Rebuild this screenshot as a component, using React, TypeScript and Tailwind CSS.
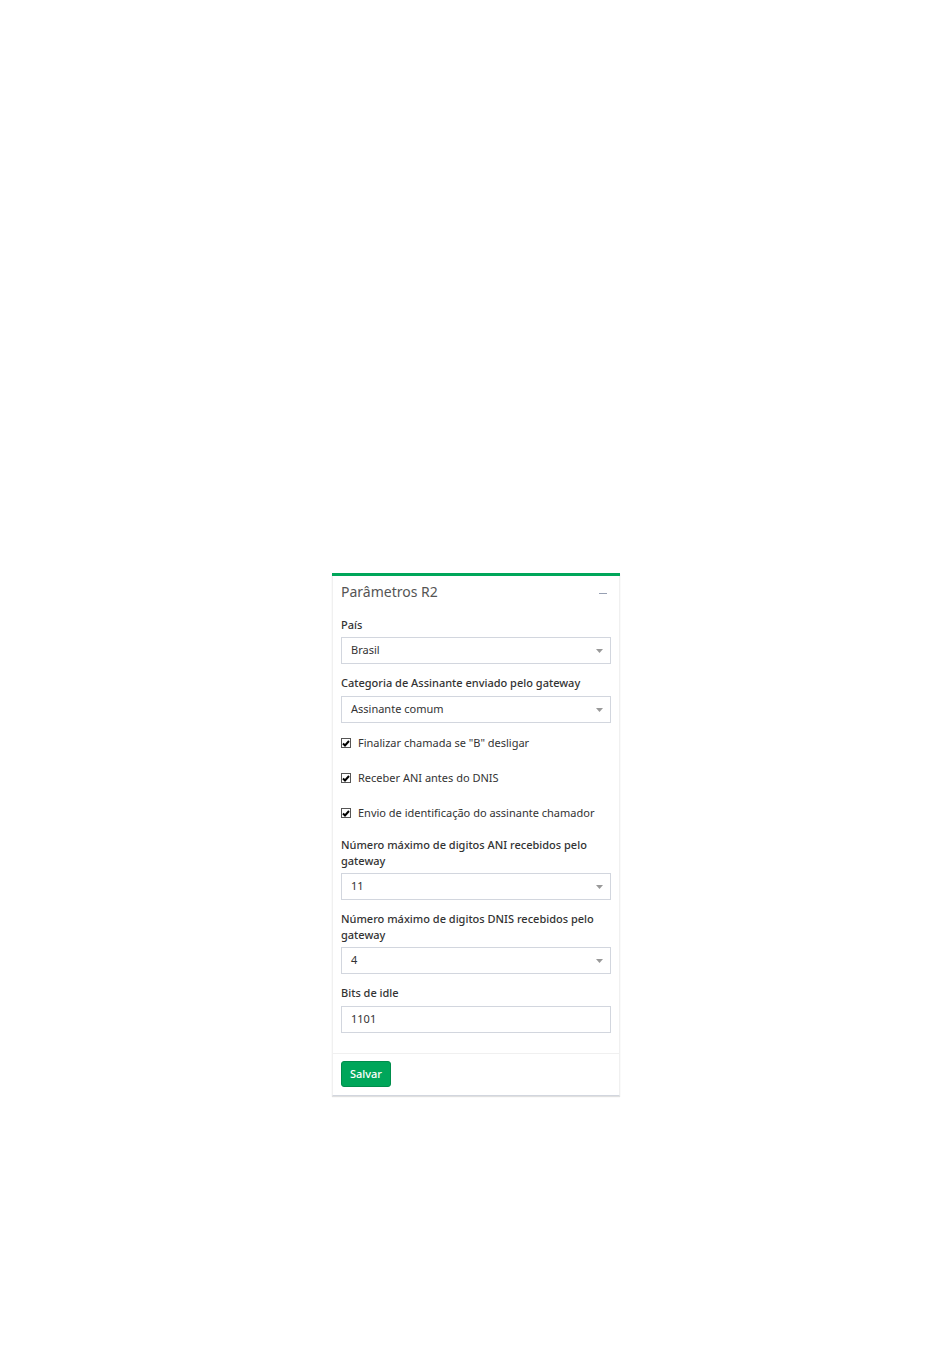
import React from "react";

const fields = {
  pais: "Brasil",
  categoria: "Assinante comum",
  ani: "11",
  dnis: "4",
  idle: "1101",
};

const checks = [
  "Finalizar chamada se \"B\" desligar",
  "Receber ANI antes do DNIS",
  "Envio de identificação do assinante chamador",
];

const Caret = () => (
  <svg width="7" height="4" viewBox="0 0 7 4" className="shrink-0">
    <path d="M0 0h7L3.5 4z" fill="#999" />
  </svg>
);

const SelectBox = ({ value }: { value: string }) => (
  <div className="flex h-[27px] items-center justify-between border border-[#d2d6de] bg-white pl-[9px] pr-[7px] text-[#333]">
    <span>{value}</span>
    <Caret />
  </div>
);

const Label = ({ children, tight }: { children: React.ReactNode; tight?: boolean }) => (
  <div className={tight ? "mb-[4px] font-medium leading-[16px] text-[#333]" : "mb-[5px] font-medium leading-[16px] text-[#333]"}>
    {children}
  </div>
);

const App: React.FC = () => {
  return (
    <div
      className="min-h-[1365px] bg-white pt-[573px]"
      style={{ fontFamily: '"Noto Sans", "Open Sans", sans-serif' }}
    >
      <div className="ml-[332px] w-[288px] border-t-[3px] border-[#00a65a] bg-white text-[11px] shadow-[0_1px_1px_rgba(0,0,0,0.12)]">
        {/* Header */}
        <div className="flex items-center justify-between border-l border-r border-[#f0f0f0] px-[8px] pt-[7px] pb-[9px]">
          <h3 className="text-[14px] leading-[18px] text-[#555]">Parâmetros R2</h3>
          <span className="mr-[4px] mt-[2px] h-[1px] w-[8px] bg-[#97a0b3]" />
        </div>

        {/* Body */}
        <div className="flex flex-col border-l border-r border-[#f0f0f0] px-[8px] pb-[20px] pt-[7px]">
          <Label tight>País</Label>
          <SelectBox value={fields.pais} />

          <div className="mt-[11px]">
            <Label>Categoria de Assinante enviado pelo gateway</Label>
            <SelectBox value={fields.categoria} />
          </div>

          <div className="mt-[12px] flex flex-col gap-[19px]">
            {checks.map((c) => (
              <label key={c} className="flex h-[16px] items-center gap-[7px] text-[#333]">
                <span className="flex h-[10px] w-[10px] items-center justify-center border border-[#555] bg-white">
                  <svg width="8" height="7" viewBox="0 0 8 7">
                    <path d="M1 3.5l2 2L7 1" stroke="#000" strokeWidth="2" fill="none" />
                  </svg>
                </span>
                {c}
              </label>
            ))}
          </div>

          <div className="mt-[16px]">
            <Label tight>
              Número máximo de digitos ANI recebidos pelo
              <br />
              gateway
            </Label>
            <SelectBox value={fields.ani} />
          </div>

          <div className="mt-[11px]">
            <Label tight>
              Número máximo de digitos DNIS recebidos pelo
              <br />
              gateway
            </Label>
            <SelectBox value={fields.dnis} />
          </div>

          <div className="mt-[11px]">
            <Label>Bits de idle</Label>
            <div className="flex h-[27px] items-center border border-[#d2d6de] bg-white pl-[9px] text-[#333]">
              {fields.idle}
            </div>
          </div>
        </div>

        {/* Footer */}
        <div className="border border-t-[#f0f0f0] border-x-[#f0f0f0] border-b-[#d2d6de] px-[8px] pt-[7px] pb-[8px]">
          <button className="h-[26px] w-[50px] rounded-[3px] border border-[#008d4c] bg-[#00a65a] font-medium text-white">
            Salvar
          </button>
        </div>
      </div>
    </div>
  );
};

export default App;
